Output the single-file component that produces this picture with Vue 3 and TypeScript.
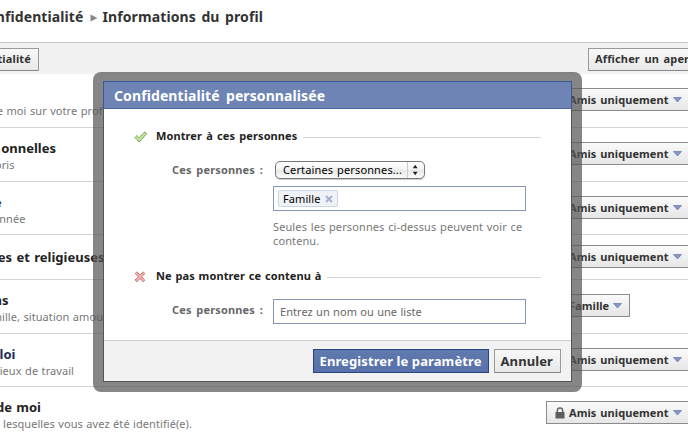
<script setup lang="ts">
interface Row {
  title?: string
  titleEnd?: number
  link?: boolean
  desc?: string
  descEnd?: number
  audience: string
  height: number
}

// titleEnd / descEnd: where each label stops, measured from the left edge of the page
const rows: Row[] = [
  { desc: 'e moi sur votre prof', descEnd: 102.5, audience: 'Amis uniquement', height: 54 },
  { title: 'onnelles', titleEnd: 56, desc: 'oris', descEnd: 14.5, audience: 'Amis uniquement', height: 54 },
  { title: 'e', titleEnd: 1.5, link: true, desc: 'nnée', descEnd: 25.5, audience: 'Amis uniquement', height: 53 },
  { title: 'es et religieuses', titleEnd: 104.5, audience: 'Amis uniquement', height: 45 },
  { title: 'ns', titleEnd: 8.5, desc: 'mille, situation amou', descEnd: 103, audience: 'Famille', height: 54 },
  { title: 'loi', titleEnd: 15.5, link: true, desc: 'ieux de travail', descEnd: 74, audience: 'Amis uniquement', height: 53 },
  { title: 'de moi', titleEnd: 41, desc: 'lesquelles vous avez été identifié(e).', descEnd: 192, audience: 'Amis uniquement', height: 54 },
]
</script>

<template>
  <div class="page">
    <header class="crumbs">
      <div class="crumb-parent"><span>nfidentialité</span></div>
      <svg class="crumb-arrow" width="8" height="8" viewBox="0 0 8 8"><path d="M0.5 0.5L7.5 4L0.5 7.5Z" fill="#888" /></svg>
      <span>Informations du profil</span>
    </header>

    <div class="toolbar">
      <div class="tool back"><span>tialité</span></div>
      <div class="tool preview">Afficher un aper</div>
    </div>

    <div v-for="(row, i) in rows" :key="i" class="row" :class="{ single: !row.desc }" :style="{ height: row.height + 'px' }">
      <div class="labels">
        <div class="title" :class="{ link: row.link }" :style="{ width: (row.titleEnd ?? 0) + 'px' }"><span v-if="row.title">{{ row.title }}</span></div>
        <div v-if="row.desc" class="desc" :style="{ width: row.descEnd + 'px' }"><span>{{ row.desc }}</span></div>
      </div>
      <div class="audience" :class="{ short: row.audience === 'Famille' }">
        <svg width="10" height="12" viewBox="0 0 10 12">
          <path d="M2.3 6V3.6a2.7 2.7 0 0 1 5.4 0V6" fill="none" stroke="#666" stroke-width="1.5" />
          <rect x="0.5" y="5" width="9" height="6.5" rx="0.6" fill="#5c5c5c" />
        </svg>
        <span>{{ row.audience }}</span>
        <svg class="caret" width="9" height="6" viewBox="0 0 9 6"><path d="M0.5 0.5H8.5L4.5 5Z" fill="#8797c4" stroke="#6577ac" stroke-width="0.7" /></svg>
      </div>
    </div>

    <div class="frame">
      <div class="dialog">
        <h2>Confidentialité personnalisée</h2>
        <div class="body">
          <div class="section">
            <svg class="mark" width="14" height="12" viewBox="0 0 14 12">
              <path d="M1 6.6L3 4.6L5.1 6.8L10.8 0.9L12.8 2.7L5.2 10.9Z" fill="#c3e59c" stroke="#568b37" stroke-width="1" stroke-dasharray="1.6 0.5" />
            </svg>
            <span class="show">Montrer à ces personnes</span><i></i>
          </div>
          <div class="field first">
            <label>Ces personnes :</label>
            <div class="control">
              <div class="select">
                <span>Certaines personnes...</span>
                <svg width="17" height="16" viewBox="0 0 17 16"><path d="M0.5 0V16" stroke="#ccc" /><path d="M5.8 6.3L8.2 2.7L10.6 6.3ZM5.8 9.7L8.2 13.3L10.6 9.7Z" fill="#222" /></svg>
              </div>
              <div class="input tokens">
                <span class="token">Famille
                  <svg width="8" height="8" viewBox="0 0 8 8"><path d="M1 1L7 7M7 1L1 7" stroke="#a3b1d3" stroke-width="1.9" /></svg>
                </span>
              </div>
              <p>Seules les personnes ci-dessus peuvent voir ce contenu.</p>
            </div>
          </div>
          <div class="section second">
            <svg class="mark" width="14" height="12" viewBox="0 0 14 12">
              <path d="M1.2 2.5L2.8 0.9L6 4L9.2 0.9L10.8 2.5L7.7 5.8L10.8 9.1L9.2 10.7L6 7.6L2.8 10.7L1.2 9.1L4.3 5.8Z" fill="#f3b4b4" stroke="#b44a4d" stroke-width="1" stroke-dasharray="1.5 0.5" />
            </svg>
            <span class="hide">Ne pas montrer ce contenu à</span><i></i>
          </div>
          <div class="field">
            <label>Ces personnes :</label>
            <div class="control">
              <div class="input placeholder">Entrez un nom ou une liste</div>
            </div>
          </div>
        </div>
        <footer>
          <div class="btn primary">Enregistrer le paramètre</div>
          <div class="btn cancel">Annuler</div>
        </footer>
      </div>
    </div>
  </div>
</template>

<style>
body { margin: 0; background: #fff; }
</style>

<style scoped>
* { box-sizing: border-box; }
.page {
  position: relative;
  width: 688px;
  height: 436px;
  overflow: hidden;
  font: 11px/14px "Noto Sans", sans-serif;
  color: #333;
  white-space: nowrap;
}
.crumbs {
  display: flex;
  align-items: center;
  height: 42px;
  padding-bottom: 8px;
  font-size: 14px;
  font-weight: 700;
  line-height: 20px;
  letter-spacing: 0.1px;
  word-spacing: 1.8px;
}
.crumb-parent { display: flex; justify-content: flex-end; width: 83.5px; }
.crumb-arrow { margin: 1px 5px 0 6px; }
.toolbar {
  display: flex;
  justify-content: space-between;
  height: 32px;
  padding-top: 5px;
  border-top: 1px solid #c4c4c4;
  background: #f1f1f1;
}
.tool {
  height: 23px;
  border: 1px solid #999;
  border-bottom-color: #888;
  background: linear-gradient(#f8f8f8, #e8e8e8);
  font-weight: 700;
  line-height: 20px;
  letter-spacing: 0.15px;
  word-spacing: 1.5px;
}
.back { display: flex; justify-content: flex-end; width: 39px; padding-right: 7px; border-left: 0; }
.preview { width: 100px; padding-left: 6px; border-right: 0; }
.row {
  display: flex;
  justify-content: space-between;
  border-bottom: 1px solid #d4d4d4;
}
.row:nth-last-of-type(2) { border-bottom: 0; }
.labels { padding-top: 12px; }
.title, .desc { display: flex; justify-content: flex-end; }
.title { height: 17px; font-size: 13px; font-weight: 700; line-height: 17px; color: #222; word-spacing: 1px; }
.title.link { color: #1d2a5b; }
.desc { height: 14px; margin-top: 1px; color: #777; letter-spacing: 0.07px; word-spacing: 0.5px; }
.audience {
  display: flex;
  align-items: center;
  flex: none;
  width: 142px;
  height: 23px;
  margin-top: 14px;
  padding-left: 8px;
  border: 1px solid #8b8b8b;
  border-right: 0;
  background: linear-gradient(#fafafa, #e6e6e6);
  font-weight: 700;
  letter-spacing: 0.07px;
  word-spacing: 1px;
}
.audience span { margin-left: 4px; }
.caret { margin: 1px 0 0 4px; }
.short { width: 84px; margin-right: 58px; border-right: 1px solid #8b8b8b; }
.single .labels { padding-top: 14px; }
.single .audience { margin-top: 10px; }

.frame {
  position: absolute;
  left: 93px;
  top: 72px;
  width: 489px;
  height: 320px;
  padding: 9px 10px 10px;
  border-radius: 8px;
  background: rgba(82, 82, 82, 0.7);
}
.dialog {
  display: flex;
  flex-direction: column;
  height: 301px;
  border: 1px solid #555;
  border-top: 0;
  background: #fff;
}
h2 {
  height: 28px;
  margin: 0 -1px;
  padding-left: 10px;
  border: 1px solid #3b5998;
  border-bottom-color: #4b66a4;
  background: #6d84b4;
  color: #fff;
  font-size: 14px;
  line-height: 27px;
  letter-spacing: 0.1px;
  word-spacing: 2.5px;
}
.body { flex: 1; padding: 20px 30px 0; }
.section { display: flex; align-items: center; height: 14px; font-weight: 700; color: #222; }
.section .mark { margin: 2px 8px 0 0; }
.section i { flex: 1; height: 1px; margin: 2px 0 0 6px; background: #d5d5d5; }
.show { letter-spacing: 0.1px; word-spacing: 1.2px; }
.hide { letter-spacing: 0.1px; word-spacing: 0.8px; }
.field { display: flex; }
.first { padding-top: 18px; }
.field label {
  width: 129px;
  padding-top: 2px;
  text-align: right;
  font-weight: 700;
  color: #666;
  letter-spacing: 0.15px;
  word-spacing: 1.8px;
}
.control { width: 253px; margin-left: 10px; }
.select {
  display: flex;
  justify-content: space-between;
  align-items: center;
  width: 150px;
  height: 18px;
  margin-left: 2px;
  padding-left: 7px;
  border: 1px solid #777;
  border-radius: 5px;
  background: linear-gradient(#fff 0%, #f3f3f3 48%, #e7e7e7 52%, #fafafa 100%);
  box-shadow: 0 1px 1px rgba(0, 0, 0, 0.2);
  color: #000;
  letter-spacing: 0.13px;
  word-spacing: 1px;
}
.input { height: 25px; border: 1px solid #8496ba; background: #fff; }
.tokens { margin-top: 7px; padding: 3px 4px; }
.token {
  display: inline-flex;
  align-items: center;
  gap: 4px;
  width: 60px;
  height: 17px;
  padding-left: 4px;
  border: 1px solid #ccd5e4;
  border-radius: 2px;
  background: #eff2f7;
  color: #000;
  letter-spacing: 0.09px;
}
.control p {
  margin: 9px 0 0;
  color: #777;
  white-space: normal;
  letter-spacing: 0.11px;
  word-spacing: 0.7px;
}
.second { margin-top: 21px; margin-bottom: 16px; }
.second + .field label { padding-top: 4px; }
.placeholder { padding-left: 6px; line-height: 24px; color: #666; letter-spacing: 0.05px; word-spacing: 0.4px; }
footer {
  display: flex;
  justify-content: flex-end;
  gap: 5px;
  height: 41px;
  padding: 8px 10px 0 0;
  border-top: 1px solid #ccc;
  background: #f2f2f2;
}
.btn {
  height: 24px;
  padding: 0 6px;
  border: 1px solid #999;
  border-bottom-color: #888;
  background: linear-gradient(#f8f8f8, #e8e8e8);
  font-size: 13px;
  font-weight: 700;
  line-height: 22px;
  letter-spacing: 0.1px;
}
.cancel { padding-right: 7px; }
.primary {
  border-color: #29447e;
  background: linear-gradient(#6079ae, #5971aa);
  color: #fff;
}
</style>
